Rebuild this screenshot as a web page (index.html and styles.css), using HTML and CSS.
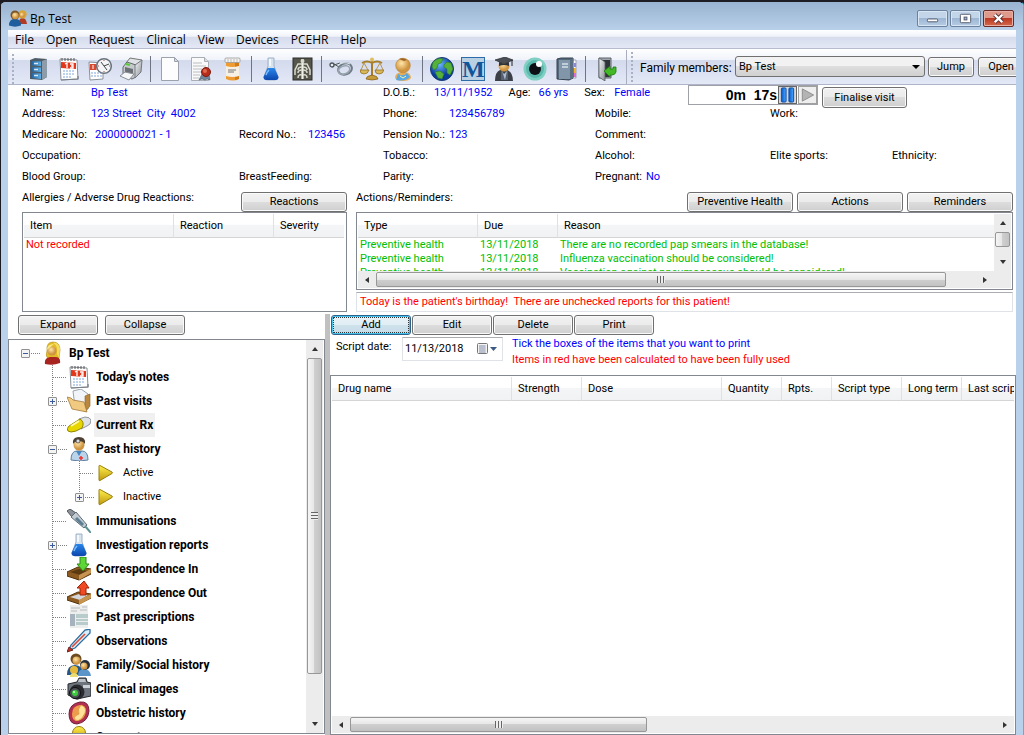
FILE: index.html
```html
<!DOCTYPE html>
<html lang="en">
<head>
    <meta charset="UTF-8">
    <meta name="viewport" content="width=device-width, initial-scale=1.0">
    <title>Bp Test</title>
    <link rel="stylesheet" href="styles.css">
</head>
<body>
    <!-- shared icons -->
    <svg class="defs" width="0" height="0" aria-hidden="true">
        <defs>
            <linearGradient id="gBlue" x1="0" x2="1"><stop offset="0" stop-color="#1d5f9c"/><stop offset="1" stop-color="#5fb0e6"/></linearGradient>
            <linearGradient id="gPause" x1="0" x2="1"><stop offset="0" stop-color="#0a58c8"/><stop offset="1" stop-color="#4aa8ff"/></linearGradient>
            <linearGradient id="gGrey" x1="0" y1="0" x2="1" y2="1"><stop offset="0" stop-color="#f4f5f5"/><stop offset="1" stop-color="#8b9196"/></linearGradient>
            <linearGradient id="gGold" x1="0" y1="0" x2="0" y2="1"><stop offset="0" stop-color="#fff04a"/><stop offset="1" stop-color="#c09a10"/></linearGradient>
            <linearGradient id="gFlask" x1="0" y1="0" x2="0" y2="1"><stop offset="0" stop-color="#2a86ea"/><stop offset="1" stop-color="#0b46ae"/></linearGradient>
            <radialGradient id="gSkin" cx=".4" cy=".35"><stop offset="0" stop-color="#ffe6a8"/><stop offset="1" stop-color="#cf9440"/></radialGradient>
            <radialGradient id="gSea" cx=".4" cy=".3"><stop offset="0" stop-color="#6db6ff"/><stop offset="1" stop-color="#0a3c9c"/></radialGradient>
            <symbol id="calendar" viewBox="0 0 24 24">
                <path d="M3 2l17 1 1 19-17 1z" fill="#fff" stroke="#8a9099"/>
                <path d="M4 5l15 1v6l-15-1z" fill="#e2371b"/>
                <path d="M8 7l2-1v5M13 7h3v4h-3M14 9h2" fill="none" stroke="#fff" stroke-width="1.3"/>
                <path d="M5 1v3M8 1v3M11 1v3M14 1v3M17 1v3" stroke="#555" stroke-width="1"/>
                <path d="M6 14h12M6 17h12M6 20h9" stroke="#a9c4e8" stroke-width="1.6" stroke-dasharray="2 1"/>
                <path d="M4 23l17-1v-3" fill="none" stroke="#777e88" stroke-width="1.2"/>
            </symbol>
            <symbol id="flask" viewBox="0 0 24 24">
                <path d="M9 1h6v8l4 11q0 3-3 3H8q-3 0-3-3l4-11z" fill="#d6e2ee" stroke="#9eb2c8"/>
                <path d="M8.500 11h7l4 9q0 3-3 3h-9q-3 0-3-3z" fill="url(#gFlask)"/>
                <path d="M7 18q1-3 3-5" stroke="#7cbcff" stroke-width="1.5" fill="none"/>
                <path d="M11 2v7" stroke="#fff" stroke-width="1.5"/>
            </symbol>
            <symbol id="people" viewBox="0 0 24 24">
                <path d="M13 20q0-8 5-8t6 8z" fill="#b03a22"/>
                <circle cx="18" cy="7" r="5.500" fill="#d9a632"/><circle cx="17.500" cy="8" r="3.500" fill="url(#gSkin)"/>
                <path d="M0 22q0-9 8-9t8 9q-8 3-16 0z" fill="#1f5f9e"/>
                <circle cx="8" cy="8" r="6" fill="#7c5526"/><circle cx="8.500" cy="9" r="4.500" fill="url(#gSkin)"/>
            </symbol>
            <symbol id="play" viewBox="0 0 24 24">
                <path d="M5 5q0-1 1-.5l12 6.500q1 1 0 1.500L6 19.500q-1 .5-1-.5z" fill="url(#gGold)" stroke="#97800e"/>
            </symbol>
        </defs>
    </svg>

    <div class="window">
        <header class="titlebar">
            <svg class="titlebar-icon" viewBox="0 0 24 24"><use href="#people"/></svg>
            <h1 class="titlebar-text">Bp Test</h1>
            <div class="titlebar-ctrl">
                <button class="ctrl-btn" type="button" aria-label="Minimize"><svg viewBox="0 0 30 16"><rect x="9.500" y="8.500" width="11" height="3" rx="1" fill="#fff" stroke="#505868"/></svg></button>
                <button class="ctrl-btn" type="button" aria-label="Maximize"><svg viewBox="0 0 30 16"><rect x="9.500" y="3.500" width="11" height="9" rx="1" fill="#fff" stroke="#505868"/><rect x="13.500" y="6.500" width="3" height="3" fill="#9db6d3" stroke="#505868"/></svg></button>
                <button class="ctrl-btn close" type="button" aria-label="Close"><svg viewBox="0 0 30 16"><path d="M11 4l8 8M19 4l-8 8" stroke="#5a3036" stroke-width="4.500"/><path d="M11 4l8 8M19 4l-8 8" stroke="#fff" stroke-width="2.600"/></svg></button>
            </div>
        </header>

        <div class="client">
            <nav class="menubar">
                <a class="menu-item" href="#">File</a>
                <a class="menu-item" href="#">Open</a>
                <a class="menu-item" href="#">Request</a>
                <a class="menu-item" href="#">Clinical</a>
                <a class="menu-item" href="#">View</a>
                <a class="menu-item" href="#">Devices</a>
                <a class="menu-item" href="#">PCEHR</a>
                <a class="menu-item" href="#">Help</a>
            </nav>

            <div class="toolbar">
                <div class="tools">
                    <span class="grip"></span>
                    <button class="tool" type="button" aria-label="Open patient"><svg viewBox="0 0 24 24"><path d="M4 3l5-2 12 1v18l-5 3-12-1z" fill="#4f5d68"/><path d="M16 4l5-2v18l-5 3z" fill="#8d9ca8"/><path d="M5 4l10 .5V9L5 8.500zM5 10l10 .5V15L5 14.500zM5 16l10 .5V22L5 21z" fill="url(#gBlue)"/><path d="M8 6.500h4M8 12.500h4M8 18.500h4" stroke="#d8e8f4" stroke-width="1.300"/></svg></button>
                    <button class="tool" type="button" aria-label="Appointments"><svg><use href="#calendar"/></svg></button>
                    <button class="tool" type="button" aria-label="Waiting room"><svg viewBox="0 0 24 24"><path d="M1 5l14 1v16L2 23z" fill="#fff" stroke="#8a9099"/><path d="M2 7h13v6H2z" fill="#d8492f"/><path d="M5 8v4M8 8h3v4H8" stroke="#fff" fill="none"/><path d="M3 16h11M3 19h11" stroke="#a9c4e8" stroke-width="1.600" stroke-dasharray="2 1"/><circle cx="16" cy="9" r="7.300" fill="#f3f5f7" stroke="#6b737c" stroke-width="1.500"/><path d="M13 5l3 4 5-2M16 9l3 4" stroke="#444" fill="none"/><path d="M16 3v1M16 14v1M10 9h1M21 9h1" stroke="#a55"/></svg></button>
                    <button class="tool" type="button" aria-label="Print"><svg viewBox="0 0 24 24"><path d="M7 6l4-5 12 2-4 6z" fill="#dfe2e4" stroke="#777"/><path d="M4 10l4-5 9 3v12l-4 2-9-3z" fill="#c5c9cc" stroke="#63686c"/><path d="M16 8l7-5-1 12-6 6z" fill="url(#gGrey)" stroke="#74797e"/><path d="M6 10l8 2v7l-8-2z" fill="#6a7075"/><path d="M1 19l5-4 9 2-5 6z" fill="#f5f7f8" stroke="#8a8f94"/><path d="M7 7l4 1" stroke="#57ca34" stroke-width="2"/></svg></button>
                    <span class="tool-sep"></span>
                    <button class="tool" type="button" aria-label="New document"><svg viewBox="0 0 24 24"><path d="M3.500 .5h13l4 4v19h-17z" fill="#fdfdfd" stroke="#9ba2ac"/><path d="M16.500 .5v4h4z" fill="#d5d9de" stroke="#9ba2ac"/></svg></button>
                    <button class="tool" type="button" aria-label="Certificate"><svg viewBox="0 0 24 24"><path d="M2.500 .5h13l4 4v19h-17z" fill="#fafafa" stroke="#a9aeb5"/><path d="M15.500 .5v4h4" fill="#ddd" stroke="#a9aeb5"/><path d="M4 6h9M4 9h13M4 12h9M4 15h8M4 18h7M4 21h6" stroke="#b8bcc1"/><path d="M13 17l-3 6 3-1 3 1 2-1 3 1-1-6z" fill="#71869a" stroke="#4a5866" stroke-width=".6"/><circle cx="17" cy="15" r="4.500" fill="#b72d1c" stroke="#7c1c10"/><circle cx="16" cy="14" r="2" fill="#df6b50"/></svg></button>
                    <button class="tool" type="button" aria-label="Prescription"><svg viewBox="0 0 24 24"><path d="M6 4h13v18q-6 3-13 0z" fill="#ee9b31"/><path d="M15 5h4v17l-4 1z" fill="#d27a14"/><path d="M6 9q6 2 13 0v10q-6 2-13 0z" fill="#f5efe4"/><path d="M8 13h8M8 15h6" stroke="#777"/><rect x="5" y="1" width="15" height="4.500" rx="1" fill="#f2f2f0" stroke="#999" stroke-width=".8"/><path d="M8 2v3M11 2v3M14 2v3M17 2v3" stroke="#bbb"/></svg></button>
                    <span class="tool-sep"></span>
                    <button class="tool" type="button" aria-label="Pathology"><svg><use href="#flask"/></svg></button>
                    <button class="tool" type="button" aria-label="Imaging"><svg viewBox="0 0 24 24"><rect x="3" y="1" width="19" height="22" fill="#55554c" stroke="#2c2c28"/><path d="M12.500 2v20" stroke="#f0f0e6" stroke-width="2.200"/><path d="M12 7H8L5 13v5M13 7h4l3 6v5M12 10q-4 0-4 3M12 13q-4 0-4 3M13 10q4 0 4 3M13 13q4 0 4 3M8 21q0-4 4-3M17 21q0-4-4-3" stroke="#d9d9cd" fill="none" stroke-width="1.500"/><circle cx="12.500" cy="4" r="2" fill="#d8d8cc"/></svg></button>
                    <span class="tool-sep"></span>
                    <button class="tool" type="button" aria-label="Procedures"><svg viewBox="0 0 24 24"><circle cx="3" cy="8" r="2" fill="#e8ecee" stroke="#4b5258" stroke-width="1.300"/><path d="M5 7l5 3M5 8l6-2" stroke="#4b5258" fill="none"/><ellipse cx="16" cy="12" rx="7" ry="5.500" transform="rotate(-20 16 12)" fill="none" stroke="#6e7a84" stroke-width="2"/><ellipse cx="15" cy="13" rx="6" ry="4" transform="rotate(-20 15 13)" fill="none" stroke="#98a4ae" stroke-width="1.500"/><path d="M9 8q6-4 12-1" fill="none" stroke="#dbe4ea"/></svg></button>
                    <button class="tool" type="button" aria-label="Medico-legal"><svg viewBox="0 0 24 24"><path d="M12 1v18M2 6q5-3 10 0 5-3 10 0" stroke="#a67e27" stroke-width="2" fill="none"/><path d="M4 6L1 13M4 6l4 7M20 6l-4 7M20 6l3 7" stroke="#b5964e" fill="none"/><path d="M0 13h9q-1 4-5 4T0 13zM15 13h9q-1 4-5 4t-4-4z" fill="#d9b85c" stroke="#8c6718" stroke-width=".7"/><path d="M6 22q0-3 6-4 6 1 6 4-6 2-12 0z" fill="#c79b3a" stroke="#80590f" stroke-width=".7"/><circle cx="12" cy="2.500" r="2" fill="#e0be60"/></svg></button>
                    <button class="tool" type="button" aria-label="Antenatal"><svg viewBox="0 0 24 24"><path d="M4 21q0-6 8-6t8 6q-2 3-8 3t-8-3z" fill="#e8ae54"/><circle cx="12" cy="8.500" r="7.300" fill="url(#gSkin)" stroke="#b57f35" stroke-width=".6"/><path d="M8 2q4-2 8 1l-3 1z" fill="#9c6322"/><path d="M5 23l2-6q5 3 9-1l3 4q-5 5-14 3z" fill="#58a7e2"/><path d="M9 19l3 2 3-2" stroke="#fff0a0" fill="none"/></svg></button>
                    <span class="tool-sep"></span>
                    <button class="tool" type="button" aria-label="Web"><svg viewBox="0 0 24 24"><circle cx="12" cy="12" r="11.500" fill="url(#gSea)" stroke="#153a73"/><path d="M3 5q5-5 10-3l-2 4-3 1-1 4-3 2-2-3zM14 8l3-3 4 1 2 6-3 6-3-2v-4l-3-2zM5 15l5-1 4 3-2 5-4-1z" fill="#55b13a" stroke="#2f7d22" stroke-width=".6"/></svg></button>
                    <button class="tool m-tool" type="button" aria-label="MIMS">M</button>
                    <button class="tool" type="button" aria-label="Education"><svg viewBox="0 0 24 24"><path d="M3 24q0-9 5-11h7q6 2 6 11z" fill="#3a3f48"/><circle cx="12" cy="9" r="5.500" fill="url(#gSkin)"/><path d="M9 13l3 5 4-5v10H9z" fill="#566070"/><path d="M10 14l2 3 3-3-2 9z" fill="#a9bdd0"/><path d="M3 3l10-3 8 3-9 4z" fill="#4b4f55" stroke="#25282c" stroke-width=".7"/><path d="M7 5v4q5-2 10 0V5l-5 2z" fill="#2f3237"/><path d="M20 3v6" stroke="#222"/></svg></button>
                    <button class="tool" type="button" aria-label="Optical"><svg viewBox="0 0 24 24"><circle cx="12" cy="12" r="11.500" fill="#7fcfc2"/><circle cx="12" cy="12" r="9" fill="#5ab8ac"/><circle cx="12" cy="12" r="6" fill="#0d1116"/><circle cx="16" cy="7" r="3" fill="#fff"/></svg></button>
                    <button class="tool" type="button" aria-label="Contacts"><svg viewBox="0 0 24 24"><path d="M18 3h4v18h-4z" fill="#fff" stroke="#889" stroke-width=".7"/><path d="M20 6h2v4h-2z" fill="#8a8ad8"/><path d="M19 11h3v5h-3z" fill="#f1b22a"/><path d="M19 16h3v4h-3z" fill="#e06ad0"/><path d="M3 2l4-1h12v20l-4 2-12-1z" fill="#55677a" stroke="#34424f"/><path d="M5 3h11v19H5z" fill="#8296a9"/><path d="M16 3l3-2v20l-3 2z" fill="#5c6f81"/><path d="M8 7h6M8 10h6" stroke="#d5e0ea" stroke-width="1.500"/></svg></button>
                    <span class="tool-sep"></span>
                    <button class="tool" type="button" aria-label="Exit"><svg viewBox="0 0 24 24"><path d="M6 1h12v20H6z" fill="#9fa6ac" stroke="#5e656b"/><path d="M10 3h7v17h-7z" fill="#2f3439"/><path d="M6 1l6 4v19l-6-4z" fill="url(#gGrey)" stroke="#596066" stroke-width=".8"/><path d="M11 14l6-5v3h3v-2h3v5q-1 3-4 3h-2v2z" fill="#43b928" stroke="#1e7a0e" stroke-width=".8"/></svg></button>
                </div>
                <div class="family">
                    <span class="grip"></span>
                    <label class="family-label" for="family">Family members:</label>
                    <span class="select-wrap"><select class="select" id="family"><option>Bp Test</option></select></span>
                    <button class="btn btn-small" type="button">Jump</button>
                    <button class="btn btn-small" type="button">Open</button>
                </div>
            </div>

            <section class="details">
                <div class="field"><span class="field-name wide">Name:</span><span class="value">Bp Test</span></div>
                <div class="field col-3 span">
                    <span class="field-name narrow">D.O.B.:</span><span class="value">13/11/1952</span>
                    <span class="field-name next">Age:</span><span class="value">66 yrs</span>
                    <span class="field-name next">Sex:</span><span class="value">Female</span>
                </div>
                <div class="visit">
                    <div class="timer">
                        <span class="timer-text">0m&nbsp; 17s</span>
                        <button class="timer-btn on" type="button" aria-label="Pause"><svg viewBox="0 0 17 17"><rect x="2" y="1" width="5" height="15" rx="1" fill="url(#gPause)" stroke="#0d4aa8"/><rect x="10" y="1" width="5" height="15" rx="1" fill="url(#gPause)" stroke="#0d4aa8"/></svg></button>
                        <button class="timer-btn" type="button" aria-label="Resume"><svg viewBox="0 0 17 17"><path d="M3 2l12 6.500L3 15z" fill="#b4b4b4" stroke="#8c8c8c"/></svg></button>
                    </div>
                    <button class="btn btn-finalise" type="button">Finalise visit</button>
                </div>

                <div class="field row-2"><span class="field-name wide">Address:</span><span class="value">123 Street&nbsp; City&nbsp; 4002</span></div>
                <div class="field row-2 col-3"><span class="field-name mid">Phone:</span><span class="value">123456789</span></div>
                <div class="field row-2 col-4"><span>Mobile:</span></div>
                <div class="field row-2 col-5"><span>Work:</span></div>

                <div class="field row-3"><span class="field-name medicare">Medicare No:</span><span class="value">2000000021 - 1</span></div>
                <div class="field row-3 col-2"><span class="field-name wide">Record No.:</span><span class="value">123456</span></div>
                <div class="field row-3 col-3"><span class="field-name mid">Pension No.:</span><span class="value">123</span></div>
                <div class="field row-3 col-4"><span>Comment:</span></div>

                <div class="field row-4"><span>Occupation:</span></div>
                <div class="field row-4 col-3"><span>Tobacco:</span></div>
                <div class="field row-4 col-4"><span>Alcohol:</span></div>
                <div class="field row-4 col-5"><span>Elite sports:</span></div>
                <div class="field row-4 col-6"><span>Ethnicity:</span></div>

                <div class="field row-5"><span>Blood Group:</span></div>
                <div class="field row-5 col-2"><span>BreastFeeding:</span></div>
                <div class="field row-5 col-3"><span>Parity:</span></div>
                <div class="field row-5 col-4"><span class="field-name narrow">Pregnant:</span><span class="value">No</span></div>
            </section>

            <section class="alerts">
                <div class="allergies">
                    <div class="alerts-head">
                        <h2 class="alerts-title">Allergies / Adverse Drug Reactions:</h2>
                        <button class="btn btn-alert" type="button">Reactions</button>
                    </div>
                    <div class="panel allergies-panel">
                        <table class="list">
                            <colgroup><col class="c-150"><col class="c-100"><col class="c-70"><col></colgroup>
                            <thead><tr><th>Item</th><th>Reaction</th><th>Severity</th></tr></thead>
                            <tbody><tr class="red"><td colspan="3">Not recorded</td></tr></tbody>
                        </table>
                    </div>
                </div>
                <div class="reminders">
                    <div class="alerts-head">
                        <h2 class="alerts-title">Actions/Reminders:</h2>
                        <div class="alerts-btns">
                            <button class="btn btn-alert" type="button">Preventive Health</button>
                            <button class="btn btn-alert" type="button">Actions</button>
                            <button class="btn btn-alert" type="button">Reminders</button>
                        </div>
                    </div>
                    <div class="panel reminders-panel">
                        <div class="reminders-main">
                            <div class="reminders-view">
                                <table class="list">
                                    <colgroup><col class="c-120"><col class="c-80"><col></colgroup>
                                    <thead><tr><th>Type</th><th>Due</th><th>Reason</th></tr></thead>
                                    <tbody class="green">
                                        <tr><td>Preventive health</td><td>13/11/2018</td><td>There are no recorded pap smears in the database!</td></tr>
                                        <tr><td>Preventive health</td><td>13/11/2018</td><td>Influenza vaccination should be considered!</td></tr>
                                        <tr><td>Preventive health</td><td>13/11/2018</td><td>Vaccination against pneumococcus should be considered!</td></tr>
                                    </tbody>
                                </table>
                            </div>
                            <div class="scroll-h">
                                <i class="arrow left"></i><span class="thumb reminders-thumb"><i class="ridges"></i></span><i class="arrow right"></i>
                            </div>
                        </div>
                        <div class="scroll-v short">
                            <i class="arrow up"></i><span class="thumb"></span><i class="arrow down"></i>
                        </div>
                    </div>
                    <p class="message">Today is the patient's birthday!&nbsp; There are unchecked reports for this patient!</p>
                </div>
            </section>

            <main class="work">
                <aside class="side">
                    <div class="side-btns">
                        <button class="btn" type="button">Expand</button>
                        <button class="btn" type="button">Collapse</button>
                    </div>
                    <div class="tree">
                        <div class="tree-view">
                            <div class="node root"><i class="toggle minus"></i><i class="dots"></i><svg class="node-icon" viewBox="0 0 24 24"><path d="M6 10q-1-9 6-9t7 8l-1 8-10 1q-4-2-2-8z" fill="#e3bb25" stroke="#b08a10" stroke-width=".6"/><circle cx="11" cy="10" r="4.500" fill="url(#gSkin)"/><path d="M4 23q-1-6 5-7h5q6 0 5 6-7 3-15 1z" fill="#a82420"/><path d="M12 2q5 2 4 11l2 4 1-10q-2-6-7-5z" fill="#f4dc60"/><path d="M6 9q0-6 7-6-4 3-7 6z" fill="#f9e98a"/></svg><span class="node-text">Bp Test</span></div>
                            <ul class="branch">
                                <li class="node"><i class="dots"></i><svg class="node-icon"><use href="#calendar"/></svg><span class="node-text">Today's notes</span></li>
                                <li class="node"><i class="toggle"></i><i class="dots"></i><svg class="node-icon" viewBox="0 0 24 24"><path d="M6 2l8-2 7 5v15l-13-2z" fill="#f1f4f8" stroke="#9aa3ad"/><path d="M18 7l5-2v12l-5 6z" fill="#b9873d" stroke="#8a5f22" stroke-width=".6"/><path d="M0 8l4 1 2 2 11 2 3 10-15-3z" fill="#f0ca80" stroke="#a4783a" stroke-width=".8"/></svg><span class="node-text">Past visits</span></li>
                                <li class="node"><i class="dots"></i><svg class="node-icon" viewBox="0 0 24 24"><path d="M12 6l6-2q5 0 6 3 0 5-4 6l-6 3z" fill="#dfe2e6" stroke="#92979e"/><path d="M2 13l11-7q5 3 2 9l-6 3q-6 2-8 0-2-2 1-5z" fill="#e8d600" stroke="#928700"/><path d="M4 13l8-5" stroke="#fffbb0" stroke-width="2"/></svg><span class="node-text current">Current Rx</span></li>
                                <li class="node"><i class="toggle minus"></i><i class="dots"></i><svg class="node-icon" viewBox="0 0 24 24"><path d="M4 23q0-9 6-9h5q6 0 6 9-8 2-17 0z" fill="#bcd4ea" stroke="#5f7f9f"/><path d="M9 14l3 5 3-5z" fill="#4887c2"/><circle cx="12" cy="8" r="5.500" fill="url(#gSkin)"/><path d="M6 7q-1-7 6-7t6 7q-2-3-6-3T6 7z" fill="#4f4034"/><circle cx="11" cy="4" r="2" fill="#d9dde2" stroke="#333" stroke-width=".7"/><path d="M12 21h4M14 19v4" stroke="#e33" stroke-width="1.500"/></svg><span class="node-text">Past history</span></li>
                                <li>
                                    <ul class="branch sub">
                                        <li class="node"><i class="dots"></i><svg class="node-icon"><use href="#play"/></svg><span class="node-text">Active</span></li>
                                        <li class="node"><i class="toggle"></i><i class="dots"></i><svg class="node-icon"><use href="#play"/></svg><span class="node-text">Inactive</span></li>
                                    </ul>
                                </li>
                                <li class="node"><i class="dots"></i><svg class="node-icon" viewBox="0 0 24 24"><path d="M0 2l3-2 6 4-4 4z" fill="#8b9299" stroke="#4f565c"/><path d="M4 8l5-5 11 13-3 3z" fill="#c3ccd4" stroke="#5f6c76"/><path d="M9 9l7 7" stroke="#5c7e92" stroke-width="3"/><path d="M18 17l6 7" stroke="#5a9095" stroke-width="2"/></svg><span class="node-text">Immunisations</span></li>
                                <li class="node"><i class="toggle"></i><i class="dots"></i><svg class="node-icon"><use href="#flask"/></svg><span class="node-text">Investigation reports</span></li>
                                <li class="node"><i class="dots"></i><svg class="node-icon" viewBox="0 0 24 24"><path d="M0 15l11-5 13 2v5l-12 6-12-4z" fill="#8d5b22" stroke="#54340d"/><path d="M3 15l9-3 9 2-8 4z" fill="#5b3a12"/><path d="M12 18v5l12-7v-4z" fill="#c69450"/><path d="M13 0h6v7h3l-6 7-6-7h3z" fill="#5ed637" stroke="#2c8c12"/></svg><span class="node-text">Correspondence In</span></li>
                                <li class="node"><i class="dots"></i><svg class="node-icon" viewBox="0 0 24 24"><path d="M0 16l11-5 13 2v4l-12 6-12-4z" fill="#8d5b22" stroke="#54340d"/><path d="M3 16l9-3 9 1-8 5z" fill="#d4d6da"/><path d="M12 19v5l12-7v-4z" fill="#c69450"/><path d="M13 14V7h-3l7-7 5 7h-3v7z" fill="#ef4a23" stroke="#9f2409"/></svg><span class="node-text">Correspondence Out</span></li>
                                <li class="node"><i class="dots"></i><svg class="node-icon" viewBox="0 0 24 24"><path d="M3 0h18v23H3z" fill="#eceded"/><path d="M4 3h9M15 2h5M4 6h6M13 5h7" stroke="#b7bcc0" stroke-width="1"/><path d="M3 9h5v12H3z" fill="#a7b3bc"/><path d="M9 9h12v4H9zM9 14h12v2H9zM9 17h12v3H9z" fill="#b7cccb"/></svg><span class="node-text">Past prescriptions</span></li>
                                <li class="node"><i class="dots"></i><svg class="node-icon" viewBox="0 0 24 24"><path d="M2 21l2-5L18 1l5-1v4L8 19z" fill="#d8ecfa" stroke="#2e6d9e" stroke-width="1.300"/><path d="M5 18L18 5" stroke="#d94c38" stroke-width="1.600"/><path d="M0 23l2-5 4 3z" fill="#b8392c" stroke="#7a221a"/></svg><span class="node-text">Observations</span></li>
                                <li class="node"><i class="dots"></i><svg class="node-icon" viewBox="0 0 24 24"><path d="M0 22q0-10 8-10t8 10z" fill="#24578c"/><circle cx="9" cy="6" r="5.500" fill="#6c4a22"/><circle cx="9.500" cy="7.500" r="4" fill="url(#gSkin)"/><path d="M11 23q0-7 6-7t7 7z" fill="#5b94c8"/><circle cx="18" cy="12" r="5" fill="#26303a"/><circle cx="17" cy="13" r="3.500" fill="url(#gSkin)"/><circle cx="7" cy="17" r="4" fill="#e6b83a"/><path d="M3 24q0-4 4-4t4 4z" fill="#eadc70"/></svg><span class="node-text">Family/Social history</span></li>
                                <li class="node"><i class="dots"></i><svg class="node-icon" viewBox="0 0 24 24"><path d="M1 7l9-2 2-4h7l1 4 4 1v13l-14 3-9-4z" fill="#6d747b" stroke="#24282c"/><path d="M12 2h6l1 3h-8z" fill="#bcc2c8"/><path d="M16 8h7v3h-7z" fill="#cdd2d6"/><circle cx="10" cy="15" r="7.500" fill="#282c30"/><circle cx="8" cy="16" r="5.500" fill="#4c5258" stroke="#111"/><circle cx="8" cy="16" r="3" fill="#3ecb3d"/><circle cx="7" cy="15" r="1" fill="#d7ffd0"/></svg><span class="node-text">Clinical images</span></li>
                                <li class="node"><i class="dots"></i><svg class="node-icon" viewBox="0 0 24 24"><path d="M2 13Q2 3 13 1q9-1 9 9-1 11-12 13-8 0-8-10z" fill="#b2304e" stroke="#75203a"/><path d="M5 13Q5 5 13 4q6 0 6 6-1 9-9 10-5 0-5-7z" fill="#ef9b4c"/><path d="M14 4q6 2 4 8l-3 5q-4 4-7 2-2-3 2-5l2-1q-2-5 2-9z" fill="#ffe19a" stroke="#cf8c2e" stroke-width=".6"/></svg><span class="node-text">Obstetric history</span></li>
                                <li class="node"><i class="dots"></i><svg class="node-icon" viewBox="0 0 24 24"><circle cx="12" cy="8" r="6.500" fill="url(#gGold)" stroke="#9a7d14"/><path d="M3 24q0-9 9-9t9 9z" fill="#d8ae2c"/></svg><span class="node-text">Consent</span></li>
                            </ul>
                        </div>
                        <div class="scroll-v">
                            <i class="arrow up"></i><span class="thumb tree-thumb"><i class="ridges flat"></i></span><i class="arrow down"></i>
                        </div>
                    </div>
                </aside>
                <div class="splitter"></div>
                <section class="rx">
                    <div class="rx-btns">
                        <button class="btn active" type="button">Add</button>
                        <button class="btn" type="button">Edit</button>
                        <button class="btn" type="button">Delete</button>
                        <button class="btn" type="button">Print</button>
                    </div>
                    <div class="rx-options">
                        <label class="rx-label" for="scriptDate">Script date:</label>
                        <div class="date">
                            <input class="date-input" id="scriptDate" type="text" value="11/13/2018">
                            <button class="date-btn" type="button" aria-label="Choose date"><svg viewBox="0 0 22 14"><rect x="1.500" y="1.500" width="10" height="10" rx="1" fill="#f4f4f4" stroke="#777"/><path d="M3 4h7M3 6h7M3 8h7M3 10h7M4 3v8M6 3v8M8 3v8" stroke="#9aa3b8" stroke-width=".8"/><path d="M14 5h7l-3.500 4z" fill="#3c5a86"/></svg></button>
                        </div>
                        <div class="rx-notes">
                            <p class="blue">Tick the boxes of the items that you want to print</p>
                            <p class="red">Items in red have been calculated to have been fully used</p>
                        </div>
                    </div>
                    <div class="rx-panel">
                        <div class="rx-view">
                            <table class="list">
                                <colgroup><col class="c-180"><col class="c-70"><col class="c-140"><col class="c-60"><col class="c-50"><col class="c-70"><col class="c-60"><col></colgroup>
                                <thead><tr><th>Drug name</th><th>Strength</th><th>Dose</th><th>Quantity</th><th>Rpts.</th><th>Script type</th><th>Long term</th><th>Last script</th></tr></thead>
                            </table>
                        </div>
                        <div class="scroll-h">
                            <i class="arrow left"></i><span class="thumb rx-thumb"><i class="ridges"></i></span><i class="arrow right"></i>
                        </div>
                    </div>
                </section>
            </main>
        </div>
    </div>
</body>
</html>
```

FILE: styles.css
```css
* {
    margin: 0;
    padding: 0;
    box-sizing: border-box;
    list-style: none;
    text-decoration: none;
}
html, body {
    width: 100%;
    height: 100%;
    overflow: hidden;
}
body {
    font-family: Roboto, "Liberation Sans", Arial, sans-serif;
    font-size: 11px;
    line-height: 16px;
    color: #000;
    background: #1c1c22;
}
button, input, select {
    font: inherit;
    color: inherit;
}
.defs {
    position: absolute;
}
.blue, .value {
    color: #00f;
}
.red {
    color: #f00;
}
.green {
    color: #00c000;
}

/* window frame */
.window {
    height: 100vh;
    display: flex;
    flex-direction: column;
    padding: 0 7px;
    border: 1px solid #1c1c22;
    border-bottom: 0;
    border-right-color: #25c8e8;
    border-top-width: 2px;
    border-radius: 6px 6px 0 0;
    background: #b9d1ea;
    overflow: hidden;
}
.titlebar {
    flex: none;
    height: 28px;
    margin: 0 -7px;
    padding: 0 9px 0 8px;
    display: flex;
    align-items: center;
    background: linear-gradient(#98b3d0, #b9d0e9);
}
.titlebar-icon {
    width: 18px;
    height: 18px;
    margin-right: 3px;
    margin-top: 4px;
}
.titlebar-text {
    font-family: "Open Sans", "Noto Sans", sans-serif;
    font-size: 12px;
    font-weight: normal;
    flex: 1;
    padding-top: 5px;
}
.titlebar-ctrl {
    display: flex;
    gap: 2px;
    padding-top: 5px;
}
.ctrl-btn {
    width: 31px;
    height: 17px;
    border: 1px solid #6c819c;
    border-radius: 2px;
    background: linear-gradient(#c3d5e9 45%, #9db6d3 50%, #b7cde6);
    box-shadow: inset 0 0 0 1px #d9e6f4;
}
.ctrl-btn svg {
    display: block;
    width: 100%;
    height: 100%;
}
.ctrl-btn.close {
    border-color: #6b2a25;
    background: linear-gradient(#e09a8c 45%, #bc3a24 50%, #d46a4c);
    box-shadow: inset 0 0 0 1px #e8b0a4;
}
.client {
    flex: 1;
    min-height: 0;
    display: flex;
    flex-direction: column;
    background: #fff;
}

/* menu and toolbar */
.menubar {
    flex: none;
    height: 19px;
    display: flex;
    align-items: center;
    padding: 1px 0 0 1px;
    border-bottom: 1px solid #b6bccc;
    background: linear-gradient(#fff, #f0f3fa 35%, #d6dcec 40%, #e4e8f6);
    font-family: "Open Sans", "Noto Sans", sans-serif;
    font-size: 12px;
}
.menu-item {
    padding: 0 6px;
    color: #000;
}
.toolbar {
    flex: none;
    height: 36px;
    display: flex;
    align-items: center;
    border-bottom: 1px solid #b0b4c8;
    background: linear-gradient(#fff, #f0f3fa 30%, #d3daed 33%, #e4e9f7);
    overflow: hidden;
}
.tools {
    display: flex;
    align-items: center;
    gap: 7px;
    padding: 4px 9px 0 4px;
    border-right: 1px solid #a8aebe;
}
.grip {
    width: 2px;
    height: 30px;
    background: repeating-linear-gradient(#a9b2c4 0 2px, transparent 2px 4px);
}
.tools .grip {
    margin-right: 5px;
}
.tool {
    flex: none;
    width: 24px;
    height: 24px;
    border: 0;
    background: none;
}
.tool svg {
    display: block;
    width: 24px;
    height: 24px;
}
.m-tool {
    border: 1px solid #2a6da8;
    background: #b9cfe2;
    font-family: "Liberation Serif", serif;
    font-size: 24px;
    line-height: 22px;
    font-weight: bold;
    color: #10559a;
}
.tool-sep {
    width: 1px;
    height: 26px;
    background: #6e7482;
}
.family {
    flex: none;
    display: flex;
    align-items: center;
    padding-left: 4px;
}
.family-label {
    width: 95px;
    margin-left: 7px;
    padding-top: 3px;
    font-size: 12px;
    white-space: nowrap;
}
.select-wrap {
    position: relative;
    margin-right: 3px;
}
.select-wrap::after {
    content: "";
    position: absolute;
    right: 5px;
    top: 9px;
    border: 4px solid transparent;
    border-top-color: #000;
    border-bottom: 0;
}
.select {
    display: block;
    width: 190px;
    height: 21px;
    padding: 0 3px;
    appearance: none;
    border: 1px solid #707070;
    border-radius: 3px;
    background: linear-gradient(#f2f2f2 50%, #dedede 50%, #d0d0d0);
}

/* buttons */
.btn {
    width: 80px;
    height: 20px;
    border: 1px solid #707070;
    border-radius: 3px;
    background: linear-gradient(#f2f2f2, #ebebeb 50%, #dddddd 50%, #cfcfcf);
    box-shadow: inset 0 0 0 1px #fafafa;
    text-align: center;
    white-space: nowrap;
}
.btn.active {
    border-color: #2c628b;
    background: linear-gradient(#eaf3f8, #e0edf4 50%, #cfe2ec 50%, #c4dce8);
    box-shadow: inset 0 0 0 1px #44c4ee;
    outline: 1px dotted #333;
    outline-offset: -3px;
}
.btn-small {
    width: 46px;
    margin-right: 4px;
}
.btn-finalise {
    width: 85px;
    height: 21px;
}
.btn-alert {
    width: 106px;
}

/* patient details */
.details {
    flex: none;
    display: grid;
    grid-template-columns: 217px 144px 212px 175px 122px 1fr;
    grid-auto-rows: 21px;
    padding-left: 14px;
}
.field {
    display: flex;
    white-space: nowrap;
}
.field-name {
    min-width: 26px;
    margin-right: 4px;
}
.field-name.wide {
    min-width: 65px;
}
.field-name.medicare {
    min-width: 69px;
}
.field-name.mid {
    min-width: 62px;
}
.field-name.narrow {
    min-width: 47px;
}
.field-name.next {
    margin-left: 16px;
}
.row-2 { grid-row: 2; }
.row-3 { grid-row: 3; }
.row-4 { grid-row: 4; }
.row-5 { grid-row: 5; }
.col-2 { grid-column: 2; }
.col-3 { grid-column: 3; }
.col-4 { grid-column: 4; }
.col-5 { grid-column: 5; }
.col-6 { grid-column: 6; }
.span {
    grid-column: 3 / 5;
    grid-row: 1;
}
.visit {
    grid-column: 4 / -1;
    grid-row: 1;
    display: flex;
    align-items: flex-start;
    gap: 4px;
    padding-left: 93px;
}
.btn-finalise {
    margin-top: 2px;
}
.timer {
    display: flex;
    align-items: center;
    width: 130px;
    height: 20px;
    border: 1px solid #a0a0a8;
    background: #fff;
}
.timer-text {
    flex: 1;
    text-align: right;
    font-family: "Liberation Sans", Arial, sans-serif;
    font-size: 14px;
    font-weight: bold;
}
.timer-btn {
    width: 19px;
    height: 18px;
    margin-left: 1px;
    border: 1px solid #a0a0a0;
    background: #eee;
}
.timer-btn.on {
    border-color: #666;
    background: #d8d8d8;
}
.timer-btn svg {
    display: block;
    width: 100%;
    height: 100%;
}

/* allergies and reminders */
.alerts {
    flex: none;
    display: flex;
    gap: 9px;
    padding: 0 3px 0 14px;
}
.allergies {
    width: 325px;
}
.reminders {
    flex: 1;
    min-width: 0;
}
.alerts-head {
    display: flex;
    justify-content: space-between;
    height: 22px;
}
.alerts-head .btn {
    margin-top: 2px;
}
.alerts-title {
    font-size: 11px;
    font-weight: normal;
}
.alerts-btns {
    display: flex;
    gap: 4px;
}
.panel {
    border: 1px solid #828790;
    padding: 1px;
    background: #fff;
}
.allergies-panel {
    height: 100px;
}
.reminders-panel {
    height: 78px;
    display: flex;
}
.reminders-main {
    flex: 1;
    min-width: 0;
    display: flex;
    flex-direction: column;
}
.reminders-view {
    flex: 1;
    min-height: 0;
    overflow: hidden;
}
.message {
    height: 20px;
    margin-top: 2px;
    padding: 0 3px;
    border: 1px solid #dfe3e8;
    border-top-color: #abadb3;
    color: #f00;
    line-height: 18px;
}
.list {
    width: 100%;
    border-collapse: separate;
    border-spacing: 0;
    table-layout: fixed;
}
.list th {
    height: 24px;
    padding: 1px 6px 0;
    border-right: 1px solid #dfe1e4;
    border-bottom: 1px solid #d5d5d5;
    background: linear-gradient(#fff 45%, #f4f5f7 50%, #f1f2f4);
    font-weight: normal;
    text-align: left;
    white-space: nowrap;
    overflow: hidden;
}
.list th:last-child {
    border-right: 0;
}
.list td {
    height: 14px;
    padding: 0 2px;
    line-height: 14px;
    white-space: nowrap;
}
.c-50 { width: 50px; }
.c-60 { width: 60px; }
.c-70 { width: 70px; }
.c-80 { width: 80px; }
.c-100 { width: 100px; }
.c-120 { width: 120px; }
.c-140 { width: 140px; }
.c-150 { width: 150px; }
.c-180 { width: 180px; }

/* scroll bars */
.scroll-h, .scroll-v {
    flex: none;
    display: flex;
    align-items: center;
    background: #ececec;
}
.scroll-h {
    height: 17px;
    padding: 1px 0;
}
.scroll-v {
    width: 17px;
    flex-direction: column;
    padding: 0 1px;
}
.arrow {
    flex: none;
    width: 18px;
    height: 18px;
    display: flex;
    align-items: center;
    justify-content: center;
}
.arrow::before {
    content: "";
    border: 3px solid transparent;
}
.arrow.left::before {
    border-right: 4px solid #333;
    border-left: 0;
}
.arrow.right::before {
    border-left: 4px solid #333;
    border-right: 0;
}
.arrow.up::before {
    border-bottom: 4px solid #333;
    border-top: 0;
}
.arrow.down::before {
    border-top: 4px solid #333;
    border-bottom: 0;
}
.arrow.right {
    margin-left: auto;
}
.arrow.down {
    margin-top: auto;
}
.thumb {
    display: flex;
    align-items: center;
    justify-content: center;
    border: 1px solid #979797;
    border-radius: 2px;
    background: linear-gradient(#f5f5f5, #e6e6e6 50%, #cfcfcf 50%, #c2c2c2);
}
.scroll-h .thumb {
    height: 15px;
}
.scroll-v .thumb {
    width: 15px;
    background: linear-gradient(90deg, #f5f5f5, #e6e6e6 50%, #cfcfcf 50%, #c2c2c2);
}
.ridges {
    width: 8px;
    height: 7px;
    background: repeating-linear-gradient(90deg, #666 0 1px, #eee 1px 3px);
}
.ridges.flat {
    height: 8px;
    width: 7px;
    background: repeating-linear-gradient(#666 0 1px, #eee 1px 3px);
}
.short .thumb {
    height: 15px;
}
.short {
    padding-bottom: 17px;
}
.reminders-thumb {
    flex: 0 1 570px;
}
.rx-thumb {
    width: 297px;
}
.tree-thumb {
    height: 316px;
}

/* lower half */
.work {
    flex: 1;
    min-height: 0;
    display: flex;
    padding-top: 2px;
}
.side {
    width: 317px;
    display: flex;
    flex-direction: column;
}
.side-btns {
    display: flex;
    gap: 7px;
    height: 25px;
    padding: 1px 10px 0;
}
.tree {
    flex: 1;
    min-height: 0;
    display: flex;
    margin-bottom: 1px;
    padding-right: 1px;
    border: 1px solid #828790;
    background: #fff;
}
.tree-view {
    flex: 1;
    overflow: hidden;
    padding-top: 1px;
}
.node {
    display: flex;
    align-items: center;
    height: 24px;
    font-size: 12px;
    font-weight: bold;
    white-space: nowrap;
}
.root {
    padding-left: 12px;
}
.dots {
    width: 14px;
    height: 1px;
    margin-left: 1px;
    background: repeating-linear-gradient(90deg, #808080 0 1px, transparent 1px 2px);
}
.root .dots {
    width: 10px;
}
.node-icon {
    width: 24px;
    height: 24px;
}
.toggle {
    width: 9px;
    height: 9px;
    border: 1px solid #919191;
    border-radius: 1px;
    background:
        linear-gradient(#3b5b9a, #3b5b9a) center / 5px 1px no-repeat,
        linear-gradient(#3b5b9a, #3b5b9a) center / 1px 5px no-repeat,
        #f4f4f4;
}
.toggle.minus {
    background: linear-gradient(#3b5b9a, #3b5b9a) center / 5px 1px no-repeat, #f4f4f4;
}
.branch {
    margin-left: 43px;
    background: repeating-linear-gradient(#808080 0 1px, transparent 1px 2px) 0 0 / 1px calc(100% - 12px) no-repeat;
}
.branch .toggle {
    margin-left: -4px;
}
.branch .toggle + .dots {
    width: 9px;
}
.branch.sub {
    margin-left: 27px;
}
.sub .node {
    font-size: 11px;
    font-weight: normal;
}
.node-text {
    padding: 0 2px 0 5px;
    line-height: 24px;
}
.root .node-text {
    padding-left: 4px;
}
.node-text.current {
    margin-left: 3px;
    padding-left: 2px;
    background: #f0f0f0;
}
.splitter {
    width: 5px;
    background: #c0c0c0;
}
.rx {
    flex: 1;
    min-width: 0;
    display: flex;
    flex-direction: column;
}
.rx-btns {
    display: flex;
    gap: 1px;
    height: 22px;
    padding: 1px 0 0 1px;
}
.rx-options {
    display: flex;
    height: 39px;
    padding-left: 6px;
}
.rx-label {
    width: 66px;
    padding-top: 3px;
}
.date {
    display: flex;
    align-items: center;
    width: 101px;
    height: 24px;
    margin: 1px 9px 0 0;
    border: 1px solid #dfe3e8;
    border-top-color: #abadb3;
}
.date-input {
    flex: 1;
    min-width: 0;
    padding-left: 2px;
    border: 0;
}
.date-btn {
    width: 24px;
    height: 14px;
    margin-right: 3px;
    border: 0;
    background: none;
}
.date-btn svg {
    display: block;
    width: 24px;
    height: 14px;
}
.rx-panel {
    flex: 1;
    min-height: 0;
    display: flex;
    flex-direction: column;
    padding: 1px;
    border: 1px solid #828790;
    background: #fff;
}
.rx-view {
    flex: 1;
    overflow: hidden;
}
```
